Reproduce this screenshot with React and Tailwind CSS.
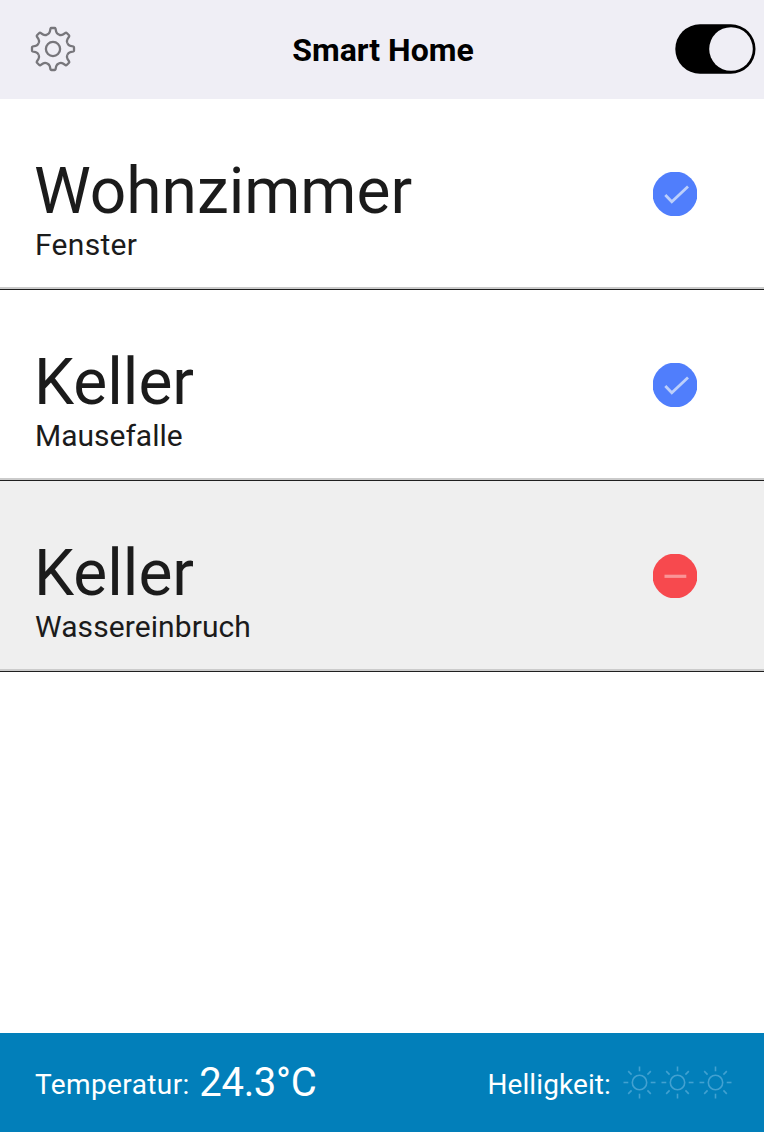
const TOOTH =
  'M-5.93-14.32C-4-15.1-3.5-16-3.2-17.3L-2.5-20.4Q-2.3-21-1.6-21H1.6Q2.3-21 2.5-20.4L3.2-17.3C3.5-16 4-15.1 5.93-14.32';
const EIGHT = [0, 45, 90, 135, 180, 225, 270, 315];

function Gear() {
  return (
    <svg className="mb-[1px] h-[46px] w-[46px]" viewBox="-23 -23 46 46" fill="none" stroke="#77767b" strokeWidth="2.3">
      {EIGHT.map((a) => (
        <path key={a} d={TOOTH} transform={`rotate(${a})`} />
      ))}
      <circle r="7.1" />
    </svg>
  );
}

function Toggle() {
  return (
    <svg className="mb-[1px] h-[50px] w-[81px]" viewBox="0 0 81 50">
      <rect x="0.3" y="0.3" width="80.2" height="49.4" rx="24.7" fill="#000" />
      <circle cx="56" cy="25" r="21.8" fill="#efeef5" />
    </svg>
  );
}

function Status({ ok }) {
  return (
    <svg className="h-[44px] w-[44px]" viewBox="0 0 44 44" fill="none">
      <circle cx="22" cy="22" r="22.4" fill={ok ? '#507efc' : '#f7494e'} />
      {ok ? (
        <path d="M12.3 23L18.8 29.8L35 14.4" stroke="#bccffb" strokeWidth="2.8" />
      ) : (
        <path d="M11.5 22.3H33.3" stroke="#fa9496" strokeWidth="3.2" />
      )}
    </svg>
  );
}

function Sun() {
  return (
    <svg className="h-[34px] w-[38px]" viewBox="-18.5 -16.5 38 34" fill="none" stroke="#42a1d1" strokeWidth="1.6">
      <circle r="7.2" />
      {EIGHT.map((a) => (
        <path key={a} d="M0-11.2V-16" transform={`rotate(${a})`} />
      ))}
    </svg>
  );
}

function Row({ room, sensor, ok, className, sensorClass = '' }) {
  return (
    <li className={`flex h-[191px] justify-between border-b border-[#1f1f1f] ${className}`}>
      <div className="flex grow justify-between border-b-2 border-[#cbcbcb] pr-[67px] pl-[34px] text-[#1b1b1b]">
        <div className="pt-[55px]">
          <div className="text-[64px] leading-[75px]">{room}</div>
          <div className={`pl-[1px] text-[30px] leading-[32px] ${sensorClass}`}>{sensor}</div>
        </div>
        <div className="pt-[73px]">
          <Status ok={ok} />
        </div>
      </div>
    </li>
  );
}

export default function App() {
  return (
    <div className="flex h-[1132px] w-[764px] flex-col overflow-hidden bg-white font-['Roboto',sans-serif]">
      <header className="grid h-[99px] shrink-0 grid-cols-[81px_1fr_81px] items-center bg-[#efeef5] pr-2 pl-[10px]">
        <div className="pl-5">
          <Gear />
        </div>
        <h1 className="text-center text-[32px] leading-[38px] font-bold text-black">Smart Home</h1>
        <Toggle />
      </header>
      <ul className="grow">
        <Row room="Wohnzimmer" sensor="Fenster" ok className="bg-white" sensorClass="tracking-[0.3px]" />
        <Row room="Keller" sensor="Mausefalle" ok className="bg-white" />
        <Row room="Keller" sensor="Wassereinbruch" ok={false} className="bg-[#efefef]" sensorClass="tracking-[0.08px]" />
      </ul>
      <footer className="flex h-[99px] shrink-0 items-center justify-between bg-[#027fba] pr-[29px] pl-[35px] text-white">
        <div className="flex items-center gap-[9px]">
          <span className="pt-[4px] text-[28px] tracking-[0.4px]">Temperatur:</span>
          <span className="pl-[0.5px] text-[40px] tracking-[-0.3px]">24.3°C</span>
        </div>
        <div className="flex items-center gap-[10px]">
          <span className="pt-[4px] text-[28px] tracking-[0.1px]">Helligkeit:</span>
          <div className="flex">
            <Sun />
            <Sun />
            <Sun />
          </div>
        </div>
      </footer>
    </div>
  );
}
